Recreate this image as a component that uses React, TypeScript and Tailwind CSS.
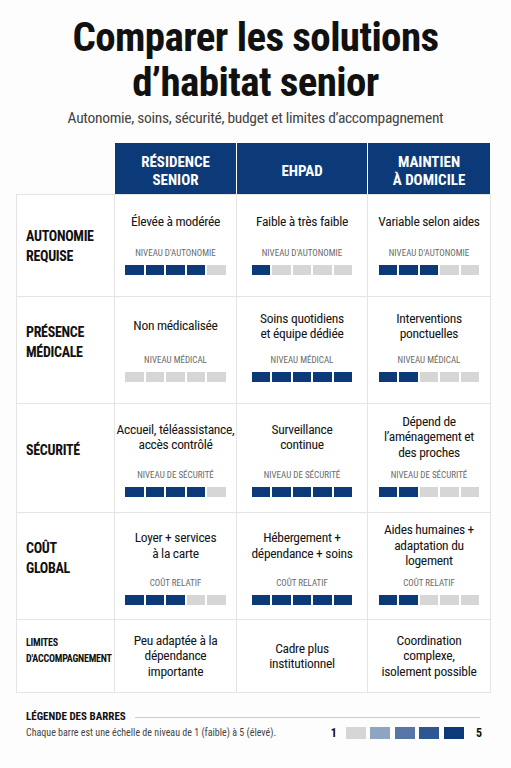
import React from "react";

const font = { fontFamily: '"Roboto Condensed", "Liberation Sans Narrow", "DejaVu Sans Condensed", sans-serif' };

type Cell = { text: string[]; label?: string; level?: number };
type Row = { title: string[]; small?: boolean; pt: string; pb: string; cells: Cell[] };

const rows: Row[] = [
  {
    title: ["AUTONOMIE", "REQUISE"],
    pt: "pt-[31px]",
    pb: "pb-[21px]",
    cells: [
      { text: ["Élevée à modérée"], label: "NIVEAU D'AUTONOMIE", level: 4 },
      { text: ["Faible à très faible"], label: "NIVEAU D'AUTONOMIE", level: 1 },
      { text: ["Variable selon aides"], label: "NIVEAU D'AUTONOMIE", level: 3 },
    ],
  },
  {
    title: ["PRÉSENCE", "MÉDICALE"],
    pt: "pt-[25px]",
    pb: "pb-[21px]",
    cells: [
      { text: ["Non médicalisée"], label: "NIVEAU MÉDICAL", level: 0 },
      { text: ["Soins quotidiens", "et équipe dédiée"], label: "NIVEAU MÉDICAL", level: 5 },
      { text: ["Interventions", "ponctuelles"], label: "NIVEAU MÉDICAL", level: 2 },
    ],
  },
  {
    title: ["SÉCURITÉ"],
    pt: "pt-[36px]",
    pb: "pb-[15px]",
    cells: [
      { text: ["Accueil, téléassistance,", "accès contrôlé"], label: "NIVEAU DE SÉCURITÉ", level: 4 },
      { text: ["Surveillance", "continue"], label: "NIVEAU DE SÉCURITÉ", level: 5 },
      { text: ["Dépend de", "l’aménagement et", "des proches"], label: "NIVEAU DE SÉCURITÉ", level: 2 },
    ],
  },
  {
    title: ["COÛT", "GLOBAL"],
    pt: "pt-[25px]",
    pb: "pb-[14px]",
    cells: [
      { text: ["Loyer + services", "à la carte"], label: "COÛT RELATIF", level: 3 },
      { text: ["Hébergement +", "dépendance + soins"], label: "COÛT RELATIF", level: 5 },
      { text: ["Aides humaines +", "adaptation du", "logement"], label: "COÛT RELATIF", level: 2 },
    ],
  },
  {
    title: ["LIMITES", "D'ACCOMPAGNEMENT"],
    small: true,
    pt: "pt-[15px]",
    pb: "pb-0",
    cells: [
      { text: ["Peu adaptée à la", "dépendance", "importante"] },
      { text: ["Cadre plus", "institutionnel"] },
      { text: ["Coordination", "complexe,", "isolement possible"] },
    ],
  },
];

function Bars({ level }: { level: number }) {
  return (
    <div className="flex gap-[2px]">
      {[1, 2, 3, 4, 5].map((i) => (
        <div
          key={i}
          className={`h-[10px] w-[18.6px] ${i <= level ? "bg-[#0c3a78]" : "bg-[#d6d6d6]"}`}
        />
      ))}
    </div>
  );
}

export default function App() {
  return (
    <div className="min-h-[768px] w-[511px] bg-[#fdfdfd] text-[#151515]" style={font}>
      <div className="pt-[15px] text-center">
        <h1 className="text-[41px] font-bold leading-[45px] tracking-[-0.6px] text-[#111]">
          <span className="block">Comparer les solutions</span>
          <span className="block">d’habitat senior</span>
        </h1>
        <p className="mt-[4px] text-[15.5px] leading-[18px] tracking-[-0.3px] text-[#444]">
          Autonomie, soins, sécurité, budget et limites d’accompagnement
        </p>
      </div>

      <div className="ml-[16px] mt-[16px] w-[475px]">
        <div className="grid grid-cols-[97px_121px_130px_122px] gap-px px-px">
          <div />
          {[["RÉSIDENCE", "SENIOR"], ["EHPAD"], ["MAINTIEN", "À DOMICILE"]].map((h) => (
            <div
              key={h[0]}
              className="flex h-[51px] flex-col items-center justify-center bg-[#0c3a78] pt-[4px] text-[15px] font-bold leading-[18px] text-white"
            >
              {h.map((l) => (
                <span key={l}>{l}</span>
              ))}
            </div>
          ))}
        </div>

        <div className="grid grid-cols-[97px_121px_130px_122px] grid-rows-[101px_106px_108px_106px_72px] gap-px bg-[#e4e4e4] p-px">
          {rows.map((r) => (
            <React.Fragment key={r.title[0]}>
              <div
                className={`flex flex-col bg-white pl-[9px] font-bold text-[#111] ${r.pt} ${
                  r.small ? "text-[10px] leading-[16px] tracking-[-0.2px]" : "text-[14px] leading-[20px] tracking-[-0.3px]"
                }`}
              >
                {r.title.map((t) => (
                  <span key={t}>{t}</span>
                ))}
              </div>
              {r.cells.map((c, i) => (
                <div key={i} className={`flex flex-col items-center bg-white text-center ${r.pb}`}>
                  <div className="flex flex-1 flex-col justify-center text-[13.5px] leading-[15.5px] tracking-[-0.3px] text-[#141414]">
                    {c.text.map((t) => (
                      <div key={t}>{t}</div>
                    ))}
                  </div>
                  {c.label && (
                    <>
                      <div className="text-[9px] leading-[11px] text-[#6a6a6a]">{c.label}</div>
                      <div className="mt-[6px]">
                        <Bars level={c.level ?? 0} />
                      </div>
                    </>
                  )}
                </div>
              ))}
            </React.Fragment>
          ))}
        </div>
      </div>

      <div className="mx-[26px] mt-[17px] w-[454px]">
        <div className="flex items-center gap-[9px]">
          <span className="text-[11px] font-bold leading-[14px] text-[#111]">LÉGENDE DES BARRES</span>
          <div className="h-px flex-1 bg-[#c7cdd6]" />
        </div>
        <div className="flex items-center justify-between">
          <span className="text-[10px] leading-[14px] text-[#444]">
            Chaque barre est une échelle de niveau de 1 (faible) à 5 (élevé).
          </span>
          <div className="mr-[-2px] flex items-center">
            <span className="mr-[9px] text-[12px] font-bold text-[#111]">1</span>
            <div className="flex gap-[4.5px]">
              {["bg-[#d6d6d6]", "bg-[#8fa3c2]", "bg-[#5776a5]", "bg-[#2f5690]", "bg-[#0c3a78]"].map((c) => (
                <div key={c} className={`h-[12px] w-[20px] ${c}`} />
              ))}
            </div>
            <span className="ml-[12px] text-[12px] font-bold text-[#111]">5</span>
          </div>
        </div>
      </div>
    </div>
  );
}
